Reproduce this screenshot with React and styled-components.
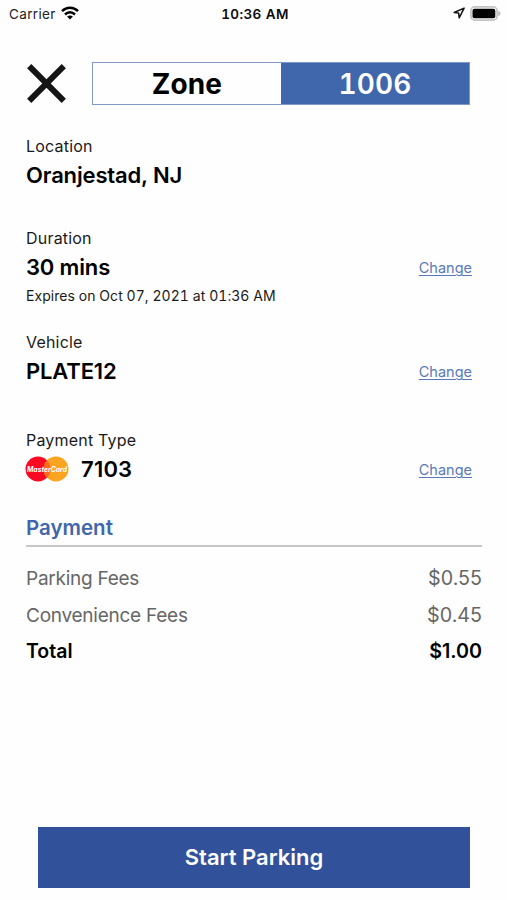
import React from "react";
import styled, { createGlobalStyle } from "styled-components";

const GlobalStyle = createGlobalStyle`
  * {
    box-sizing: border-box;
  }

  body {
    margin: 0;
    background: #fefefe;
    color: #0b0b0b;
    font-family: Inter, "Liberation Sans", sans-serif;
  }
`;

const Screen = styled.div`
  display: flex;
  flex-direction: column;
  width: 507px;
  height: 900px;
  overflow: hidden;
`;

const StatusBar = styled.header`
  display: grid;
  grid-template-columns: 1fr auto 1fr;
  align-items: center;
  height: 28px;
  padding: 0 6px 0 9px;
  font-size: 13.5px;
  line-height: 28px;
`;

const StatusGroup = styled.div`
  display: flex;
  align-items: center;
  justify-content: ${({ $end }) => ($end ? "flex-end" : "flex-start")};
  gap: 5px;
  color: #222;
  letter-spacing: 0.35px;

  svg {
    display: block;
    margin-top: -2px;
  }
`;

const Time = styled.div`
  font-weight: 600;
  letter-spacing: 0.4px;
  font-variant-numeric: tabular-nums;
`;

const TopBar = styled.div`
  display: flex;
  align-items: center;
  padding: 34px 37px 0 26px;
`;

const CloseButton = styled.button`
  display: block;
  width: 41px;
  height: 41px;
  margin-right: 25px;
  padding: 0;
  border: 0;
  background: none;

  svg {
    display: block;
  }
`;

const ZoneBox = styled.div`
  display: grid;
  grid-template-columns: 1fr 1fr;
  flex: 1;
  height: 43px;
  border: 1.5px solid #7f98c9;
`;

const ZoneCell = styled.div`
  display: flex;
  align-items: center;
  justify-content: center;
  background: ${({ $filled }) => ($filled ? "#4067ac" : "#fefefe")};
  color: ${({ $filled }) => ($filled ? "#fefefe" : "#000")};
  font-size: 28px;
  font-weight: ${({ $filled }) => ($filled ? 600 : 700)};
  font-variant-numeric: tabular-nums;
  letter-spacing: 0.1px;
`;

const Details = styled.main`
  display: flex;
  flex-direction: column;
  padding: 30px 25px 0 26px;
`;

const Section = styled.section`
  height: ${({ $height }) => $height}px;
`;

const Label = styled.div`
  margin-bottom: 3px;
  font-size: 16px;
  line-height: 22px;
  letter-spacing: 0.2px;
  color: #1a1a1a;
`;

const ValueRow = styled.div`
  display: flex;
  align-items: center;
  height: 30px;
  padding-right: 10px;

  svg {
    display: block;
    margin: 0 12px 0 -1px;
  }
`;

const Value = styled.div`
  flex: 1;
  font-size: 22px;
  font-weight: 600;
  line-height: 30px;
  letter-spacing: ${({ $spacing }) => $spacing || "-0.15px"};
  color: #000;
`;

const ChangeLink = styled.a`
  padding-top: 2px;
  font-size: 14.5px;
  line-height: 20px;
  color: #5a79b8;
  text-decoration: underline;
  text-decoration-thickness: 1px;
  text-underline-offset: 2px;
`;

const Note = styled.div`
  margin-top: 4px;
  font-size: 14px;
  line-height: 20px;
  letter-spacing: 0.05px;
  font-variant-numeric: tabular-nums;
  color: #1a1a1a;
`;

const PaymentTitle = styled.h2`
  margin: 0 0 13px;
  padding-bottom: 3px;
  border-bottom: 2px solid #c6c7c8;
  font-size: 20.5px;
  font-weight: 600;
  line-height: 29px;
  color: #4166aa;
`;

const FeeRow = styled.div`
  display: flex;
  align-items: baseline;
  justify-content: space-between;
  height: 36.5px;
  font-size: 19.7px;
  font-weight: ${({ $total }) => ($total ? 600 : 400)};
  line-height: 36px;
  color: ${({ $total }) => ($total ? "#000" : "#666")};
`;

const FeeName = styled.span`
  font-size: ${({ $total }) => ($total ? 19.5 : 19)}px;
  letter-spacing: ${({ $total }) => ($total ? "0" : "-0.25px")};
`;

const Footer = styled.footer`
  margin-top: auto;
  padding: 0 37px 12px 38px;
`;

const StartButton = styled.button`
  display: block;
  width: 100%;
  height: 61px;
  padding: 0 0 2px;
  border: 0;
  background: #31519a;
  color: #fefefe;
  font-family: inherit;
  font-size: 22px;
  font-weight: 600;
`;

const WifiIcon = () => (
  <svg width="18" height="14" viewBox="0 0 18 14" fill="none" stroke="#000" strokeWidth="2.5">
    <path d="M1 5.2C5.6 0.7 12.4 0.7 17 5.2" />
    <path d="M4 8.5C6.9 5.6 11.1 5.6 14 8.5" />
    <path d="M9 13.4L6.1 10.6C7.7 9.1 10.3 9.1 11.9 10.6Z" fill="#000" stroke="none" />
  </svg>
);

const LocationIcon = () => (
  <svg width="12" height="12" viewBox="0 0 12 12" fill="none" stroke="#111" strokeWidth="1.5" strokeLinejoin="round">
    <path d="M11.1 1.1L1.2 5.5L5.6 6L6.2 10.8Z" />
  </svg>
);

const BatteryIcon = () => (
  <svg width="31" height="15" viewBox="0 0 31 15">
    <rect x="0.9" y="0.9" width="26.2" height="13.2" rx="4" fill="#fefefe" stroke="#c4c4c4" strokeWidth="1.8" />
    <rect x="2.5" y="2.7" width="22.8" height="9.6" rx="2" fill="#000" />
    <path d="M28.3 4.8C31 5.6 31 9.4 28.3 10.2Z" fill="#b5b5b5" />
  </svg>
);

const CloseIcon = () => (
  <svg width="41" height="41" viewBox="0 0 41 41" stroke="#151515" strokeWidth="6">
    <path d="M3.2 3.2L37.8 37.8M37.8 3.2L3.2 37.8" />
  </svg>
);

const MasterCardLogo = () => (
  <svg width="44" height="26" viewBox="0 0 44 26">
    <circle cx="13" cy="13" r="12.5" fill="#f90a22" />
    <circle cx="31" cy="13" r="12.5" fill="#fba421" />
    <path d="M22 4.3A12.5 12.5 0 0 1 22 21.7A12.5 12.5 0 0 1 22 4.3Z" fill="#fb6a1e" />
    <text
      x="22"
      y="15.6"
      textAnchor="middle"
      textLength="40"
      lengthAdjust="spacingAndGlyphs"
      fontSize="7"
      fontWeight="700"
      fontStyle="italic"
      fill="#fff"
    >
      MasterCard
    </text>
  </svg>
);

const fees = [
  { name: "Parking Fees", amount: "$0.55" },
  { name: "Convenience Fees", amount: "$0.45" },
  { name: "Total", amount: "$1.00", total: true },
];

const Detail = ({ label, value, note, icon, change, height, spacing }) => (
  <Section $height={height}>
    <Label>{label}</Label>
    <ValueRow>
      {icon}
      <Value $spacing={spacing}>{value}</Value>
      {change && <ChangeLink>Change</ChangeLink>}
    </ValueRow>
    {note && <Note>{note}</Note>}
  </Section>
);

const App = () => {
  return (
    <Screen>
      <GlobalStyle />
      <StatusBar>
        <StatusGroup>
          Carrier
          <WifiIcon />
        </StatusGroup>
        <Time>10:36 AM</Time>
        <StatusGroup $end>
          <LocationIcon />
          <BatteryIcon />
        </StatusGroup>
      </StatusBar>

      <TopBar>
        <CloseButton aria-label="Close">
          <CloseIcon />
        </CloseButton>
        <ZoneBox>
          <ZoneCell>Zone</ZoneCell>
          <ZoneCell $filled>1006</ZoneCell>
        </ZoneBox>
      </TopBar>

      <Details>
        <Detail label="Location" value="Oranjestad, NJ" height={92} />
        <Detail label="Duration" value="30 mins" note="Expires on Oct 07, 2021 at 01:36 AM" height={104} change />
        <Detail label="Vehicle" value="PLATE12" height={98} change />
        <Detail label="Payment Type" value="7103" icon={<MasterCardLogo />} height={84} spacing="0.2px" change />

        <PaymentTitle>Payment</PaymentTitle>
        {fees.map((fee) => (
          <FeeRow key={fee.name} $total={fee.total}>
            <FeeName $total={fee.total}>{fee.name}</FeeName>
            <span>{fee.amount}</span>
          </FeeRow>
        ))}
      </Details>

      <Footer>
        <StartButton>Start Parking</StartButton>
      </Footer>
    </Screen>
  );
};

export default App;
